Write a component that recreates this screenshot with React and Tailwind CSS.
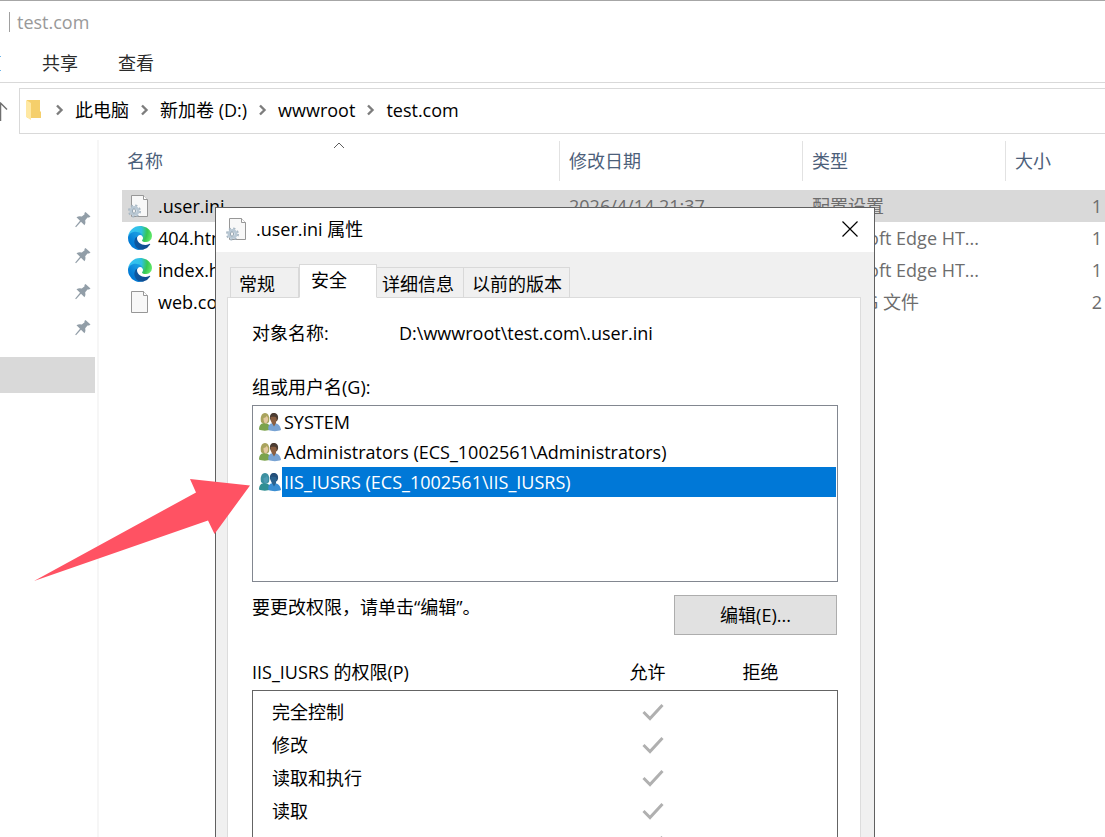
import { useState } from 'react';

const CRUMBS = ['此电脑', '新加卷 (D:)', 'wwwroot', 'test.com'];

const FILES = [
  { name: '.user.ini', date: '2026/4/14 21:37', type: '配置设置', size: '1', icon: 'ini' },
  { name: '404.html', date: '', type: 'Microsoft Edge HT...', size: '1', icon: 'edge' },
  { name: 'index.html', date: '', type: 'Microsoft Edge HT...', size: '1', icon: 'edge' },
  { name: 'web.config', date: '', type: 'CONFIG 文件', size: '2', icon: 'file' },
];

const TABS = [
  { label: '常规', width: 'w-[69px] pl-2' },
  { label: '安全', width: 'w-[78px] pl-[11px]' },
  { label: '详细信息', width: 'w-[87px] pl-[5px]' },
  { label: '以前的版本', width: 'w-[106px] pl-2' },
];

const GROUPS = [
  'SYSTEM',
  'Administrators (ECS_1002561\\Administrators)',
  'IIS_IUSRS (ECS_1002561\\IIS_IUSRS)',
];

const PERMISSIONS = ['完全控制', '修改', '读取和执行', '读取', ''];

function EdgeIcon() {
  return (
    <svg viewBox="0 0 256 256" className="h-6 w-6" aria-hidden="true">
      <defs>
        <linearGradient id="edge-dark" x1="63" y1="178" x2="241" y2="178" gradientUnits="userSpaceOnUse">
          <stop offset="0" stopColor="#0c59a4" />
          <stop offset="1" stopColor="#114a8b" />
        </linearGradient>
        <linearGradient id="edge-mid" x1="157" y1="100" x2="46" y2="221" gradientUnits="userSpaceOnUse">
          <stop offset="0" stopColor="#1b9de2" />
          <stop offset="0.3" stopColor="#1595df" />
          <stop offset="0.7" stopColor="#0680d7" />
          <stop offset="1" stopColor="#0078d4" />
        </linearGradient>
        <radialGradient id="edge-top" cx="30" cy="55" r="240" gradientUnits="userSpaceOnUse">
          <stop offset="0" stopColor="#35c1f1" />
          <stop offset="0.25" stopColor="#34c1ed" />
          <stop offset="0.5" stopColor="#2fc2df" />
          <stop offset="0.75" stopColor="#36c752" />
          <stop offset="1" stopColor="#66eb6e" />
        </radialGradient>
      </defs>
      <g transform="translate(-4.63 -4.92)">
        <path
          fill="url(#edge-dark)"
          d="M235.68 195.46a93.73 93.73 0 0 1-10.54 4.71 101.87 101.87 0 0 1-35.9 6.46c-47.32 0-88.54-32.55-88.54-74.32A31.48 31.48 0 0 1 117.13 105c-42.8 1.8-53.8 46.4-53.8 72.53 0 73.88 68.09 81.37 82.76 81.37 7.91 0 19.84-2.3 27-4.56l1.31-.44a128.34 128.34 0 0 0 66.6-52.8 4 4 0 0 0-5.32-5.64z"
        />
        <path
          fill="url(#edge-mid)"
          d="M110.34 246.34A79.2 79.2 0 0 1 87.6 225a80.72 80.72 0 0 1 29.53-120c3.12-1.47 8.45-4.13 15.54-4a32.35 32.35 0 0 1 25.69 13 31.88 31.88 0 0 1 6.36 18.66c0-.21 24.46-79.6-80-79.6-43.9 0-80 41.66-80 78.21a130.15 130.15 0 0 0 12.11 56 128 128 0 0 0 156.38 67.11 75.55 75.55 0 0 1-62.78-8z"
        />
        <path
          fill="url(#edge-top)"
          d="M156.94 153.78c-.81 1.05-3.3 2.5-3.3 5.66 0 2.61 1.7 5.12 4.72 7.23 14.38 10 41.49 8.68 41.56 8.68a59.56 59.56 0 0 0 30.27-8.35 61.38 61.38 0 0 0 30.43-52.88c.26-22.41-8-37.31-11.34-43.91C228.09 28.76 182.35 4.92 132.61 4.92a128 128 0 0 0-128 126.2c.48-36.54 36.8-66.05 80-66.05 3.5 0 23.46.34 42 10.07 16.34 8.58 24.9 18.94 30.85 29.21 6.18 10.67 7.28 24.15 7.28 29.52s-2.74 13.33-7.8 19.91z"
        />
      </g>
    </svg>
  );
}

function FileIcon({ gear }) {
  return (
    <svg viewBox="0 0 24 24" className="h-6 w-6" aria-hidden="true">
      <path d="M3.5 1.5h12l4 4v17h-16z" fill="#f8f8f8" stroke="#979797" />
      <path d="M15.5 1.5v4h4" fill="#fff" stroke="#979797" />
      {gear && (
        <g>
          <circle cx="6.5" cy="17" r="5.6" fill="none" stroke="#a9b8c4" strokeWidth="1.8" strokeDasharray="2.2 2.2" />
          <circle cx="6.5" cy="17" r="3.6" fill="#e6edf2" stroke="#b9c8d4" strokeWidth="2.8" />
          <ellipse cx="6" cy="17" rx="1.6" ry="2.2" fill="#f4f4f4" stroke="#8294a2" strokeWidth="0.8" />
        </g>
      )}
    </svg>
  );
}

function UsersIcon({ selected }) {
  const c = selected
    ? { hair: '#3d90a0', face: '#4d9bb3', top: '#308f93', hair2: '#244f79', face2: '#2a628f', top2: '#3a8ed2' }
    : { hair: '#a9a35d', face: '#e3c9a0', top: '#7ba34d', hair2: '#4b3c32', face2: '#8a5f42', top2: '#79a3d3' };
  return (
    <svg viewBox="0 0 22 20" className="h-5 w-[22px] shrink-0" aria-hidden="true">
      <path d="M0 17.5C0 13 2.5 11 5.5 11s6 2 6 6.5C9 19 2.5 19 0 17.5z" fill={c.top} />
      <path d="M2 10C1 5 2.5 1 6 1s5 4 4 9c-2 2-6 2-8 0z" fill={c.hair} />
      <path d="M4.5 6c1.5 0 2.5-1 3-2 1.5 1 1.7 2.5 1.5 4S7.5 11.5 6.5 11.5 4.3 8.5 4.5 6z" fill={c.face} />
      <path d="M9.5 18c-1-4 1-7 5-7s7 2.5 7.5 7c-3 1.5-9.5 1.5-12.5 0z" fill={c.top2} />
      <path d="M13 11l2 3.500 2-3.500v-2h-4z" fill={c.face2} />
      <path d="M11 6.5C10.5 3 12 1 15 1s4.500 2.500 4 6l-1 2h-6z" fill={c.hair2} />
      <path d="M11.500 5c2 0 4-.5 5 0s1.500 2 1 4-1.500 3-3 3-3-2.500-3-7z" fill={c.face2} />
    </svg>
  );
}

function PinIcon() {
  return (
    <svg viewBox="0 0 16 16" className="h-4 w-4" aria-hidden="true">
      <path
        d="M10.5 0L15.5 4.5 14 5.5 12.5 5.5 10.2 8.2Q11 11 9.5 13.2L6 9.8 1 15.2.2 14.4 5 8.8 1.5 5.2Q4 3.8 6.8 4.6L9.6 2.2 9.4 1z"
        fill="#929ea8"
      />
    </svg>
  );
}

function Chevron() {
  return (
    <svg viewBox="0 0 8 12" className="h-3 w-2" aria-hidden="true">
      <path d="M1 1.5L5.500 6 1 10.500" fill="none" stroke="#7d7d7d" strokeWidth="2.4" />
    </svg>
  );
}

function Explorer() {
  return (
    <div className="flex h-full flex-col">
      <header className="border-b border-[#d9d9d9]">
        <div className="flex h-11 items-center border-t border-[#a6a6a6] pb-0.5 pl-[9px] text-[#999]">
          <span className="mr-[7px] h-5 w-px bg-[#a0a0a0]" />
          test.com
        </div>
        <nav className="flex h-[38px] items-center gap-10 text-[#2b2b2b]">
          <svg viewBox="0 0 2 16" className="h-4 w-0.5" aria-hidden="true">
            <path d="M0 1.5h1M0 15.5h1" stroke="#6db6ea" />
          </svg>
          <button type="button">共享</button>
          <button type="button">查看</button>
        </nav>
      </header>

      <div className="mt-[5px] flex h-[46px] items-center">
        <svg viewBox="0 0 19 20" className="h-5 w-[19px] shrink-0" aria-hidden="true">
          <path d="M.5 2v18M-6 8.5L.5 2 7 8.5" fill="none" stroke="#707070" strokeWidth="1.5" />
        </svg>
        <div className="flex h-full flex-1 items-center border border-r-0 border-[#d9d9d9] pb-0.5 pl-1.5">
          <svg viewBox="0 0 16 22" className="mr-3.5 h-[22px] w-4" aria-hidden="true">
            <path d="M1 1h13v11l1 1v6H1z" fill="#f5cf6b" />
            <path d="M0 1l5 3v17l-5-3z" fill="#ffe8a2" />
          </svg>
          <ol className="flex items-center">
            {CRUMBS.map((crumb) => (
              <li key={crumb} className="flex items-center">
                <Chevron />
                <a href="#" className="mr-3 ml-[11px] text-black">{crumb}</a>
              </li>
            ))}
          </ol>
        </div>
      </div>

      <div className="flex flex-1">
        <aside className="mt-1.5 w-[99px] shrink-0 border-r-2 border-[#f6f6f6] pt-[62px]">
          {[0, 1, 2, 3].map((row) => (
            <div key={row} className="flex h-9 items-center justify-end pr-1.5">
              <PinIcon />
            </div>
          ))}
          <div className="mt-[11px] mr-0.5 h-9 bg-[#d9d9d9]" />
        </aside>

        <table className="mt-[7px] ml-[23px] flex-1 table-fixed border-separate border-spacing-0 self-start text-left text-[#6d6d6d]">
          <thead className="text-[#4c607a]">
            <tr className="h-10">
              <th className="relative w-[437px] pl-[5px] font-normal">
                名称
                <svg viewBox="0 0 12 7" className="absolute top-px left-[211px] h-[7px] w-3" aria-hidden="true">
                  <path d="M1 6l5-5 5 5" fill="none" stroke="#5d5d5d" />
                </svg>
              </th>
              <th className="w-[243px] border-l border-[#e2e2e2] pl-[9px] font-normal">修改日期</th>
              <th className="w-[203px] border-l border-[#e2e2e2] pl-[9px] font-normal">类型</th>
              <th className="border-l border-[#e2e2e2] pl-[9px] font-normal">大小</th>
            </tr>
          </thead>
          <tbody>
            <tr className="h-[9px]" aria-hidden="true" />
            {FILES.map((file, i) => (
              <tr key={file.name} className={i === 0 ? 'h-8 bg-[#d9d9d9]' : 'h-8'}>
                <td className="pl-1.5 text-black">
                  <span className="flex items-center gap-1.5">
                    {file.icon === 'edge' ? <EdgeIcon /> : <FileIcon gear={file.icon === 'ini'} />}
                    {file.name}
                  </span>
                </td>
                <td className="pl-2.5">{file.date}</td>
                <td className="pl-2.5">{file.type}</td>
                <td className="pr-[3px] text-right">{file.size}</td>
              </tr>
            ))}
          </tbody>
        </table>
      </div>
    </div>
  );
}

function PropertiesDialog() {
  const [tab, setTab] = useState('安全');
  const [group, setGroup] = useState(GROUPS[2]);

  return (
    <section
      role="dialog"
      aria-label=".user.ini 属性"
      className="absolute top-[207px] left-[215px] w-[660px] border border-[#606060] bg-[#f0f0f0] text-black"
    >
      <div className="flex h-11 items-center bg-white pr-4 pb-0.5 pl-2.5">
        <FileIcon gear />
        <h1 className="ml-1.5 flex-1">.user.ini 属性</h1>
        <button type="button" aria-label="关闭">
          <svg viewBox="0 0 16 16" className="h-4 w-4" aria-hidden="true">
            <path d="M.5.5l15 15M15.5.5l-15 15" stroke="#000" strokeWidth="1.2" />
          </svg>
        </button>
      </div>

      <div className="pt-3 pr-[13px] pl-[11px]">
        <div role="tablist" className="relative -mb-px flex items-end pl-[3px]">
          {TABS.map(({ label, width }) => (
            <button
              key={label}
              type="button"
              role="tab"
              aria-selected={label === tab}
              onClick={() => setTab(label)}
              className={`${width} border border-[#d9d9d9] text-left ${
                label === tab ? 'h-[34px] border-b-white bg-white pb-0.5' : 'h-[31px] pt-0.5 not-first:border-l-0'
              }`}
            >
              {label}
            </button>
          ))}
        </div>

        <div className="border border-[#dcdcdc] bg-white pt-[21px] pr-[22px] pl-6">
          <div className="flex h-7 items-center">
            <span className="w-[147px]">对象名称:</span>
            <span>D:\wwwroot\test.com\.user.ini</span>
          </div>

          <h2 id="groups" className="mt-[26px] h-7 leading-7">组或用户名(G):</h2>
          <ul role="listbox" aria-labelledby="groups" className="mt-1 h-[177px] border border-[#828790] p-px">
            {GROUPS.map((name) => (
              <li
                key={name}
                role="option"
                aria-selected={name === group}
                onClick={() => setGroup(name)}
                className="flex h-[30px] items-center pl-[5px]"
              >
                <UsersIcon selected={name === group} />
                <span
                  className={
                    name === group
                      ? 'ml-px h-full flex-1 bg-[#0078d7] pl-0.5 leading-[30px] text-white'
                      : 'ml-px flex-1 pl-0.5'
                  }
                >
                  {name}
                </span>
              </li>
            ))}
          </ul>

          <div className="mt-[13px] mr-px flex h-10 justify-between">
            <p className="leading-6">要更改权限，请单击“编辑”。</p>
            <button type="button" className="w-[163px] border border-[#adadad] bg-[#e1e1e1]">
              编辑(E)...
            </button>
          </div>

          <div className="mt-[23px] flex h-7 items-center">
            <span className="flex-1">IIS_IUSRS 的权限(P)</span>
            <span className="w-[113px] text-center">允许</span>
            <span className="mr-[21px] w-[113px] text-center">拒绝</span>
          </div>
          <table className="mt-1 w-full border border-[#646464]">
            <tbody>
              <tr className="h-[5px]" aria-hidden="true" />
              {PERMISSIONS.map((name) => (
                <tr key={name} className="h-[33px]">
                  <td className="pl-[19px]">{name}</td>
                  <td className="w-[113px]">
                    <svg viewBox="0 0 22 18" className="mx-auto h-[18px] w-[22px]" aria-label="允许">
                      <path d="M1.5 9L8 15.5 20.5 2" fill="none" stroke="#b0b0b0" strokeWidth="3" />
                    </svg>
                  </td>
                  <td className="w-[128px]" />
                </tr>
              ))}
            </tbody>
          </table>
        </div>
      </div>
    </section>
  );
}

export default function App() {
  return (
    <main className="relative h-screen overflow-hidden bg-white font-['Open_Sans','Noto_Sans_CJK_SC',sans-serif] text-lg leading-6 whitespace-nowrap">
      <Explorer />
      <PropertiesDialog />
      {/* callout arrow pointing at the selected group */}
      <svg viewBox="0 0 216 103" className="pointer-events-none absolute top-[479px] left-[34px] h-[103px] w-[216px]" aria-hidden="true">
        <path d="M216 6.5L156 0 162 13.5 0 102 174 41.5 180.5 55z" fill="#ff5263" />
      </svg>
    </main>
  );
}
